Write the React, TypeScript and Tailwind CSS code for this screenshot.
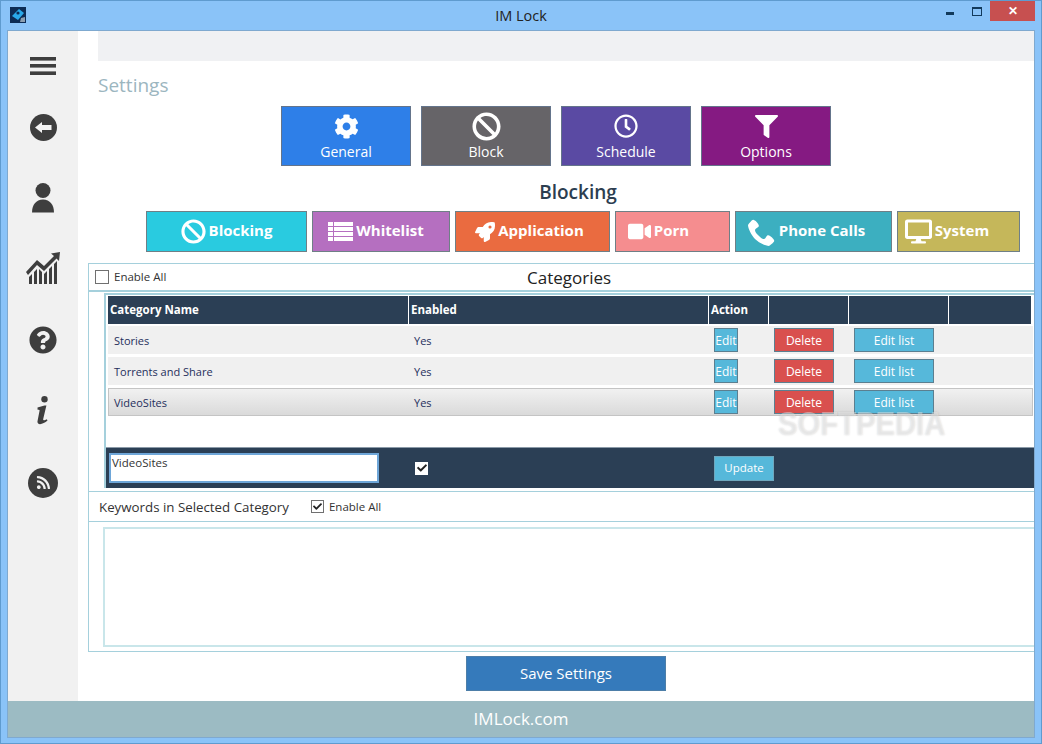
import React from 'react';
import { FaCog, FaBan, FaRegClock, FaFilter, FaRocket, FaVideo, FaDesktop, FaQuestionCircle, FaRss, FaCheck } from 'react-icons/fa';
import { ImPhone } from 'react-icons/im';

const FONT = "font-['Open_Sans','Liberation_Sans',sans-serif]";

const BarsIcon = () => (
  <svg width="26" height="18" viewBox="0 0 26 18" fill="#3e3e3e">
    <rect width="26" height="3.6" />
    <rect y="7" width="26" height="3.6" />
    <rect y="14.4" width="26" height="3.6" />
  </svg>
);

const BackIcon = () => (
  <svg width="27" height="27" viewBox="0 0 27 27">
    <circle cx="13.5" cy="13.5" r="13.5" fill="#3e3e3e" />
    <path d="M5 13.5 L12 8 V11 H21.5 V16 H12 V19 Z" fill="#f4f4f4" />
  </svg>
);

const UserIcon = () => (
  <svg width="24" height="30" viewBox="0 0 24 30" fill="#3e3e3e">
    <circle cx="12" cy="7.5" r="7.5" />
    <path d="M1 29.5 C1 22 5 16.5 12 16.5 C19 16.5 23 22 23 29.5 Z" />
  </svg>
);

const ChartIcon = () => (
  <svg width="34" height="33" viewBox="0 0 34 33" fill="#3e3e3e">
    <path d="M0 20 L11 8 L18 14 L28 4 L25 1.5 L34 0 L33 9 L30.5 6.5 L18 19 L11 13 L2 23 Z" />
    <path d="M3 25 L6 22 V32 H3 Z M8 20 L11 17 V32 H8 Z M13 17 L16 20 V32 H13 Z M18 22 L21 19 V32 H18 Z M23 17 L26 14 V32 H23 Z M28 12 L31 9 V32 H28 Z" />
  </svg>
);

const InfoIcon = () => (
  <svg width="14" height="29" viewBox="0 0 14 29" fill="#3e3e3e">
    <circle cx="8.5" cy="3.2" r="3.2" />
    <path d="M1.5 11.5 L8.5 9.5 H10.4 L7.2 23 C6.9 24.6 7.9 24.8 10.8 23.2 L11.5 24.6 C7.5 28.4 0.9 30 1.5 25.2 L3.6 14.6 C3.7 13.6 2.7 13.5 1.6 13.8 Z" />
  </svg>
);

const ListIcon = () => (
  <svg width="25" height="19" viewBox="0 0 25 19" fill="currentColor">
    {[0, 5, 10, 15].map((y) => (
      <g key={y}>
        <rect y={y} width="5" height="4" />
        <rect x="6" y={y} width="19" height="4" />
      </g>
    ))}
  </svg>
);

const AppIcon = () => (
  <svg width="16" height="16" viewBox="0 0 16 16">
    <rect width="16" height="16" fill="#0d2c55" />
    <path d="M2 9 L9 2 L14 6 L8 13 Z" fill="#2aa9ea" />
    <circle cx="8" cy="6" r="1.6" fill="#0d2c55" />
    <path d="M11 11 L15 10 V15 H10 Z" fill="#8d9fb0" />
  </svg>
);

const sideItems = [
  { icon: <BarsIcon />, cls: 'h-[71px] pb-[2px]' },
  { icon: <BackIcon />, cls: 'h-[50px] mb-[10px]' },
  { icon: <UserIcon />, cls: 'h-[71px]' },
  { icon: <ChartIcon />, cls: 'h-[71px]' },
  { icon: <FaQuestionCircle size={28} color="#3e3e3e" />, cls: 'h-[71px]' },
  { icon: <InfoIcon />, cls: 'h-[71px]' },
  {
    icon: (
      <span className="flex h-[30px] w-[30px] items-center justify-center rounded-full bg-[#3e3e3e]">
        <FaRss size={15} color="#f1f1f1" />
      </span>
    ),
    cls: 'h-[71px] pt-[2px]',
  },
];

const tiles = [
  { label: 'General', icon: <FaCog size={25} />, bg: 'bg-[#2e7fe8]' },
  { label: 'Block', icon: <FaBan size={29} />, bg: 'bg-[#666468]' },
  { label: 'Schedule', icon: <FaRegClock size={24} />, bg: 'bg-[#5a4aa3]' },
  { label: 'Options', icon: <FaFilter size={23} />, bg: 'bg-[#851a82]' },
];

const tabs = [
  { label: 'Blocking', icon: <FaBan size={25} />, cls: 'w-[161px] bg-[#29cbe0]' },
  { label: 'Whitelist', icon: <ListIcon />, cls: 'w-[138px] bg-[#b56fc0] pr-[10px]' },
  { label: 'Application', icon: <FaRocket size={20} />, cls: 'w-[155px] bg-[#ea6b40] pr-[6px]' },
  { label: 'Porn', icon: <FaVideo size={23} />, cls: 'w-[115px] bg-[#f58d8f] pr-[28px]' },
  { label: 'Phone Calls', icon: <ImPhone size={28} />, cls: 'w-[157px] bg-[#3cafc0] pr-[14px]' },
  { label: 'System', icon: <FaDesktop size={27} />, cls: 'w-[123px] bg-[#c5b75a] pr-[23px]' },
];

const categories = ['Stories', 'Torrents and Share', 'VideoSites'];

const SmallButton = ({ label, cls }: { label: string; cls: string }) => (
  <span className={`flex h-[24px] items-center justify-center border border-[#5b7f90] pt-[1px] text-[12px] text-white ${cls}`}>{label}</span>
);

export default function App() {
  return (
    <div className={`relative flex h-[744px] w-[1042px] flex-col overflow-hidden border border-[#5f9bcf] bg-[#8ac3f8] px-[6px] pb-[5px] text-[#222] ${FONT}`}>
      {/* title bar */}
      <div className="relative flex h-[29px] shrink-0 items-center justify-center">
        <span className="absolute left-[3px] top-[6px]"><AppIcon /></span>
        <span className="text-[14.5px]">IM Lock</span>
        <div className="absolute right-0 top-0 flex items-start">
          <span className="mr-[18px] mt-[11px] h-[3px] w-[8px] bg-[#123a5c]" />
          <span className="mr-[8px] mt-[6px] h-[9px] w-[10px] border border-t-2 border-[#123a5c]" />
          <span className="flex h-[20px] w-[45px] items-center justify-center bg-[#c75050] text-[12px] font-bold leading-none text-white">✕</span>
        </div>
      </div>

      <div className="flex min-h-0 flex-1 flex-col border border-[#7fa9cf] bg-white">
        <div className="flex min-h-0 flex-1">
          {/* sidebar */}
          <div className="flex w-[70px] shrink-0 flex-col items-center bg-[#f1f1f1]">
            {sideItems.map((item, i) => (
              <div key={i} className={`flex w-full items-center justify-center ${item.cls}`}>{item.icon}</div>
            ))}
          </div>

          {/* main */}
          <div className="flex min-w-0 flex-1 flex-col overflow-hidden">
            <div className="ml-[20px] h-[30px] shrink-0 bg-[#f0f1f3]" />
            <div className="ml-[20px] flex h-[45px] shrink-0 items-center pt-[3px] text-[19px] text-[#9cb6bf]">Settings</div>

            <div className="ml-[203px] flex h-[60px] shrink-0 gap-[10px]">
              {tiles.map((t) => (
                <div key={t.label} className={`flex w-[130px] flex-col items-center border border-[#64748b] pt-[4px] text-white ${t.bg}`}>
                  <span className="flex h-[30px] items-center justify-center">{t.icon}</span>
                  <span className="text-[14px] leading-[22px]">{t.label}</span>
                </div>
              ))}
            </div>

            <div className="ml-[443px] flex h-[45px] w-[114px] shrink-0 items-center justify-center pt-[7px] text-[19px] font-semibold text-[#2c3e50]">Blocking</div>

            <div className="ml-[68px] flex h-[41px] shrink-0 gap-[5px]">
              {tabs.map((t) => (
                <div key={t.label} className={`flex shrink-0 items-center justify-center gap-[3px] border border-[#6f7f86] text-[15px] font-bold text-white ${t.cls}`}>
                  {t.icon}
                  <span className="pb-[3px]">{t.label}</span>
                </div>
              ))}
            </div>

            {/* categories panel */}
            <div className="ml-[10px] mt-[11px] flex h-[389px] w-[970px] shrink-0 flex-col border border-[#a5d0dc]">
              <div className="relative flex h-[28px] shrink-0 items-center border-b-2 border-[#a5d0dc]">
                <span className="ml-[6px] h-[14px] w-[14px] border border-[#707070] bg-white" />
                <span className="ml-[5px] text-[11.5px] text-[#333]">Enable All</span>
                <span className="absolute left-[438px] top-[1px] text-[17px] text-[#222]">Categories</span>
              </div>

              <div className="ml-[15px] mt-[1px] flex h-[195px] shrink-0 flex-col border-l-2 border-t-2 border-[#a5d0dc] pt-[1px]">
                <div className="ml-[2px] grid h-[28px] w-[923px] shrink-0 grid-cols-[301px_300px_60px_80px_100px_1fr] bg-[#2b3f55] text-[11.5px] font-bold text-white">
                  {['Category Name', 'Enabled', 'Action', '', '', ''].map((h, i) => (
                    <div key={i} className="flex items-center border-r border-white pl-[2px] last:border-r-0">{h}</div>
                  ))}
                </div>
                <div className="ml-[2px] mt-[2px] flex w-[925px] flex-col gap-[3px]">
                  {categories.map((name, i) => (
                    <div
                      key={name}
                      className={`grid h-[28px] grid-cols-[301px_300px_60px_80px_100px_1fr] items-center text-[11px] text-[#1f2f5c] ${
                        i === 2 ? 'bg-gradient-to-b from-[#f2f2f2] to-[#d9d9d9] shadow-[inset_0_0_0_1px_#c4c4c4]' : 'bg-[#f0f0f0]'
                      }`}
                    >
                      <span className="pl-[6px] pt-[2px]">{name}</span>
                      <span className="pl-[5px] pt-[2px]">Yes</span>
                      <span className="pl-[5px]"><SmallButton label="Edit" cls="w-[24px] bg-[#56b8da]" /></span>
                      <span className="pl-[5px]"><SmallButton label="Delete" cls="w-[60px] bg-[#d9504e]" /></span>
                      <span className="pl-[5px]"><SmallButton label="Edit list" cls="w-[80px] bg-[#56b8da]" /></span>
                      <span />
                    </div>
                  ))}
                </div>
                <div className="mt-auto flex h-[41px] shrink-0 items-center border-t border-[#8b9aa8] bg-[#2b3f55]">
                  <div className="ml-[3px] h-[30px] w-[270px] border-2 border-[#6ea6d8] bg-white pl-[1px] text-[11.5px] leading-[15px] text-[#333]">VideoSites</div>
                  <span className="ml-[36px] flex h-[13px] w-[13px] items-center justify-center bg-white text-[#222]"><FaCheck size={10} /></span>
                  <span className="ml-[286px] flex h-[25px] w-[60px] items-center justify-center border border-[#6fa7bd] bg-[#56b8da] text-[11.5px] text-white">Update</span>
                </div>
              </div>

              <div className="mt-[3px] flex h-[31px] shrink-0 items-center border-y border-[#a5d0dc] pl-[10px]">
                <span className="pt-[2px] text-[13.3px] text-[#333]">Keywords in Selected Category</span>
                <span className="ml-[22px] flex h-[13px] w-[13px] items-center justify-center border border-[#707070] bg-white text-[#222]"><FaCheck size={9} /></span>
                <span className="ml-[5px] text-[11.5px] text-[#333]">Enable All</span>
              </div>

              <div className="ml-[14px] mt-[5px] h-[120px] shrink-0 border-2 border-[#c9e6ea]" />
            </div>

            <div className="ml-[388px] mt-[4px] flex h-[35px] w-[200px] shrink-0 items-center justify-center border border-[#4d7ea8] bg-[#357abb] text-[15px] text-white">Save Settings</div>
          </div>
        </div>

        <div className="flex h-[36px] shrink-0 items-center justify-center bg-[#9cbbc3] text-[17px] text-white">IMLock.com</div>
      </div>

      {/* watermark */}
      <span className="absolute left-[777px] top-[397px] origin-left scale-x-[0.86] font-['Liberation_Sans',sans-serif] text-[34px] font-bold text-white/40 [text-shadow:0_0_2px_rgba(120,120,120,0.3)]">SOFTPEDIA</span>
    </div>
  );
}
